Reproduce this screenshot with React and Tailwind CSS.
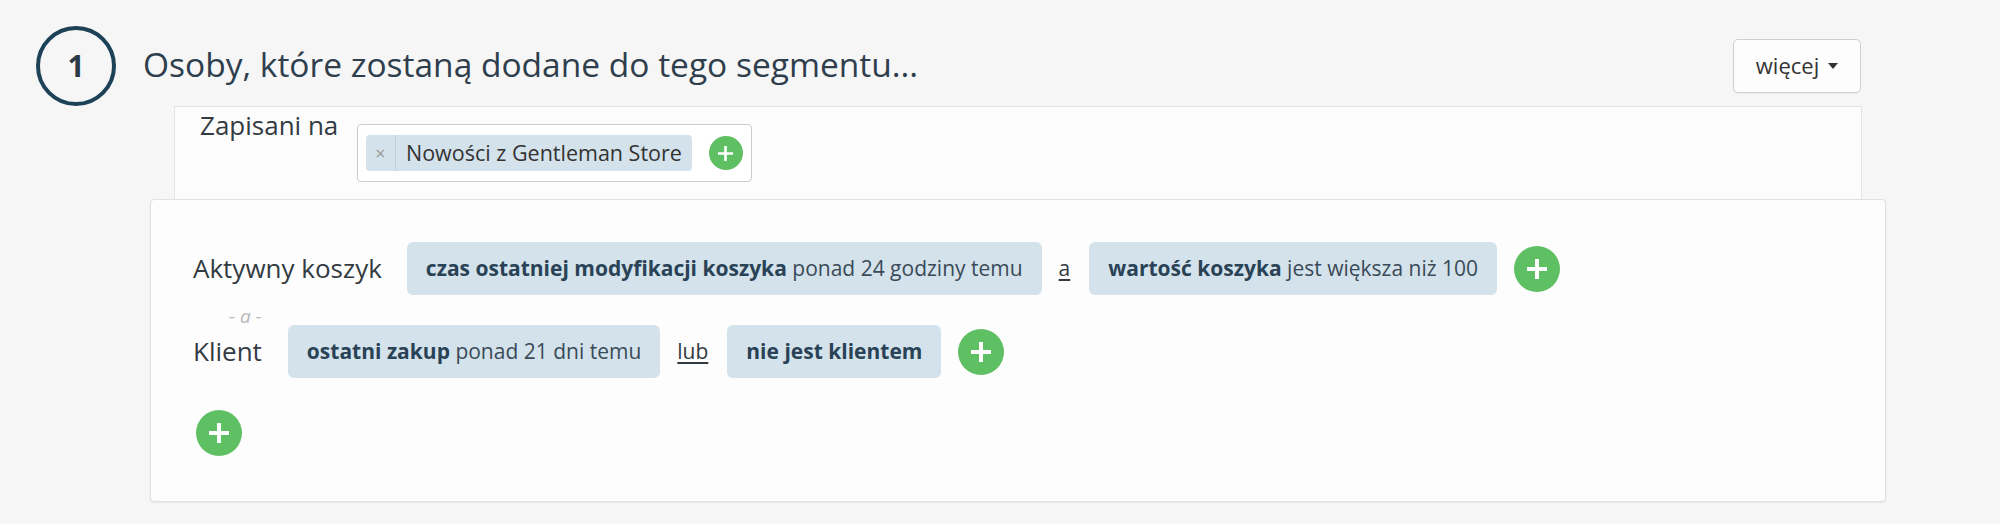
import React from 'react';

const PlusButton = ({ big }) => (
  <span
    className={
      big
        ? 'w-[46px] h-[46px] rounded-full bg-[#5fbf63] flex items-center justify-center shrink-0'
        : 'w-[34px] h-[34px] rounded-full bg-[#5fbf63] flex items-center justify-center shrink-0'
    }
  >
    <svg
      width={big ? 20 : 15}
      height={big ? 20 : 15}
      viewBox="0 0 20 20"
      fill="none"
      stroke="#ffffff"
      strokeWidth={big ? 4 : 3.5}
    >
      <path d="M10 0v20M0 10h20" />
    </svg>
  </span>
);

const Chip = ({ bold, rest }) => (
  <div className="h-[53px] px-[19px] rounded-[6px] bg-[#d3e2eb] flex items-center text-[21px] text-[#3a4a58] whitespace-nowrap">
    <span className="font-bold text-[#2a4256]">{bold}</span>
    {rest && <span>&nbsp;{rest}</span>}
  </div>
);

const Connector = ({ children }) => (
  <span className="text-[21px] text-[#333b42] underline underline-offset-[3px] pr-[2px]">{children}</span>
);

const App = () => {
  return (
    <div className="w-[2000px] h-[524px] bg-[#f6f6f6] font-['Open_Sans',sans-serif] pt-[25px] overflow-hidden">
      {/* header */}
      <div className="flex items-center w-[1861px] pl-[36px] h-[81px]">
        <div className="w-[80px] h-[80px] rounded-full border-[4px] border-[#1d4157] flex items-center justify-center text-[30px] font-bold text-[#2b3a45] shrink-0">
          1
        </div>
        <h1 className="ml-[27px] text-[33.5px] leading-none text-[#2e3e4d] -mt-[2px]">
          Osoby, które zostaną dodane do tego segmentu...
        </h1>
        <button className="ml-auto w-[128px] h-[54px] border border-[#cfcfcf] rounded-[5px] bg-[#fdfdfd] flex items-center justify-center gap-[9px] text-[22px] text-[#333333] shadow-[0_1px_1px_rgba(0,0,0,0.04)]">
          więcej
          <svg width="10" height="6" viewBox="0 0 10 6">
            <path d="M0 0h10L5 6z" fill="#333333" />
          </svg>
        </button>
      </div>

      {/* subscribed to */}
      <div className="ml-[174px] w-[1688px] h-[93px] border border-b-0 border-[#e4e4e4] bg-[#fcfcfc] flex items-start pl-[25px]">
        <div className="w-[157px] text-[26px] leading-[36px] text-[#333b42]">Zapisani na</div>
        <div className="mt-[17px] w-[395px] h-[58px] border border-[#cccccc] rounded-[4px] bg-white flex items-center pl-[8px] gap-[17px]">
          <div className="h-[36px] rounded-[4px] bg-[#d3e2eb] flex items-center">
            <span className="w-[30px] h-full flex items-center justify-center text-[18px] text-[#9a9a9a] border-r border-[#bdd0dc]">
              ×
            </span>
            <span className="px-[10px] text-[21.5px] text-[#333333] whitespace-nowrap">Nowości z Gentleman Store</span>
          </div>
          <PlusButton />
        </div>
      </div>

      {/* conditions */}
      <div className="ml-[150px] w-[1736px] h-[303px] border border-[#e0e0e0] rounded-[4px] bg-[#fdfdfd] shadow-[0_1px_2px_rgba(0,0,0,0.06)] pt-[42px] pl-[42px]">
        <div className="flex items-center h-[53px] gap-[17px]">
          <span className="text-[26px] text-[#333b42] mr-[8px]">Aktywny koszyk</span>
          <Chip bold="czas ostatniej modyfikacji koszyka" rest="ponad 24 godziny temu" />
          <Connector>a</Connector>
          <Chip bold="wartość koszyka" rest="jest większa niż 100" />
          <PlusButton big />
        </div>
        <div className="h-[30px] pl-[36px] pt-[12px] text-[19px] leading-[19px] italic text-[#b8b8b8] whitespace-pre">- a -</div>
        <div className="flex items-center h-[53px] gap-[17px]">
          <span className="text-[26px] text-[#333b42] mr-[9px]">Klient</span>
          <Chip bold="ostatni zakup" rest="ponad 21 dni temu" />
          <Connector>lub</Connector>
          <Chip bold="nie jest klientem" />
          <PlusButton big />
        </div>
        <div className="mt-[32px] ml-[3px]">
          <PlusButton big />
        </div>
      </div>
    </div>
  );
};

export default App;
